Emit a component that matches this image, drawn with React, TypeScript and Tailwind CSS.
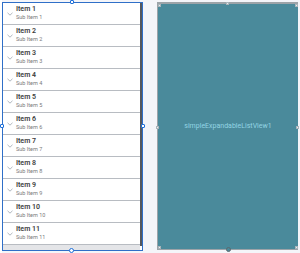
const items = Array.from({ length: 11 }, (_, i) => i + 1);

function Chevron() {
  return (
    <svg width="6" height="4" viewBox="0 0 6 4" className="shrink-0">
      <path d="M0.5 0.8 L3 3.2 L5.5 0.8" fill="none" stroke="#9aa3ad" strokeWidth="0.8" />
    </svg>
  );
}

function Handle({ className }: { className: string }) {
  return <div className={`absolute h-[4px] w-[4px] rounded-[1px] border border-[#1e6fd9] bg-white ${className}`} />;
}

function GrayHandle({ className }: { className: string }) {
  return <div className={`absolute h-[3px] w-[3px] border border-[#a9b4ba] bg-[#e8ecee] ${className}`} />;
}

export default function App() {
  return (
    <div className="flex h-[253px] w-[300px] bg-[#f4f5f9] font-['Roboto',sans-serif]">
      <div className="w-[2px] bg-white" />
      <div className="relative mt-[2px] mb-[2px] flex w-[141px] flex-col border border-[#2f6fc8] bg-white">
        <div className="flex min-h-0 flex-1">
          <div className="flex min-w-0 flex-1 flex-col overflow-hidden">
            {items.map((n) => (
              <div key={n} className="flex h-[22px] shrink-0 items-center gap-[3px] border-b border-[#b8bcc2] pl-[4px]">
                <Chevron />
                <div className="flex flex-col leading-none">
                  <span className="text-[7px] font-semibold text-[#3c3c3c]">Item {n}</span>
                  <span className="mt-[2px] text-[5.5px] text-[#7a7a7a]">Sub Item {n}</span>
                </div>
              </div>
            ))}
            <div className="flex-1 bg-[#e4e5e8]" />
          </div>
          <div className="mb-[4px] w-[2px] bg-[#55585e]" />
        </div>
        <Handle className="left-[67px] -top-[3px]" />
        <Handle className="-left-[3px] top-[121px]" />
        <Handle className="-right-[3px] top-[121px]" />
        <div className="absolute -bottom-[3px] left-[66px] h-[5px] w-[5px] rounded-full border border-[#1e6fd9] bg-white" />
      </div>
      <div className="w-[14px]" />
      <div className="relative mt-[2px] mb-[3px] flex w-[141px] items-center justify-center border-t-[2px] border-l-[1px] border-b-[1px] border-[#9ca3a8] bg-[#4a8a9b]">
        <span className="text-[7px] text-[#93d4e3]">simpleExpandableListView1</span>
        <GrayHandle className="left-[0px] top-[0px]" />
        <GrayHandle className="right-[0px] top-[0px]" />
        <GrayHandle className="left-[68px] -top-[2px]" />
        <GrayHandle className="-left-[2px] top-[122px]" />
        <GrayHandle className="-right-[1px] top-[122px]" />
        <GrayHandle className="left-[0px] bottom-[0px]" />
        <GrayHandle className="right-[0px] bottom-[0px]" />
        <div className="absolute -bottom-[3px] left-[68px] h-[5px] w-[5px] rounded-full border border-[#5c6a70] bg-[#4a8a9b]" />
      </div>
    </div>
  );
}
